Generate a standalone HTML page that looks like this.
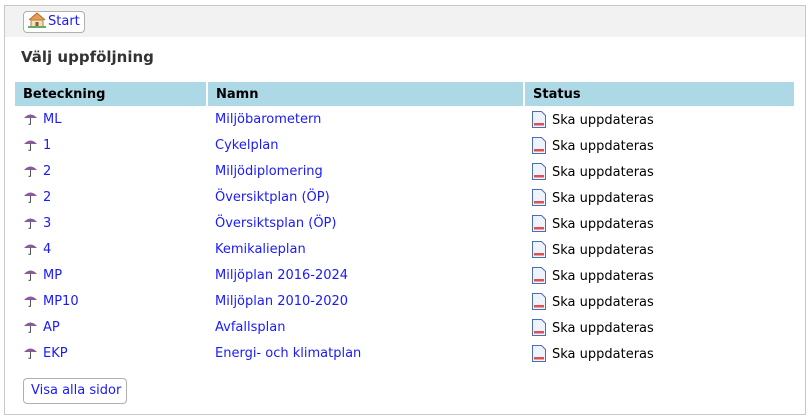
<!DOCTYPE html>
<html><head><meta charset="utf-8"><style>
*{box-sizing:border-box}
body{margin:0;width:809px;height:419px;background:#fff;font-family:"DejaVu Sans","Liberation Sans",sans-serif;font-size:13px;position:relative;overflow:hidden}
.outer{position:absolute;left:4px;top:5px;width:802px;height:410px;border:1px solid #c8c8c8;background:#fff}
.band{position:absolute;left:0;top:0;right:0;height:31px;background:#f2f2f2}
.btn{position:absolute;border:1px solid #b0b0b0;border-radius:4px;background:#fff;color:#1a1aff;line-height:20px}
h1{position:absolute;left:16px;top:42px;margin:0;font-size:15px;font-weight:bold;color:#333}
table{position:absolute;left:10px;top:76px;width:779px;border-collapse:collapse}
th{background:#add8e6;text-align:left;height:24px;padding:0 8px;font-weight:bold;color:#000;border-left:2px solid #fff}
th:first-child{border-left:none}
td{height:26px;padding:2px 8px 0;color:#1a1aff;vertical-align:middle;line-height:16px}
td.s{color:#000}
.u{display:inline-block;width:15px;height:13px;vertical-align:-2px;margin-right:5px}
.u svg,.d svg{display:block}
.d{display:inline-block;vertical-align:-3px;margin-right:6px;height:16px}
</style></head><body>
<div class="outer">
<div class="band"></div>
<div class="btn" style="left:18px;top:5px;width:62px;height:22px;padding-left:4px"><svg width="18" height="16" style="vertical-align:-3px;margin-right:2px" viewBox="0 0 18 16"><path d="M1 8L9 1l8 7" fill="#e8a050" stroke="#c06020"/><rect x="3" y="8" width="12" height="7" fill="#f4e0b0" stroke="#a08060"/><rect x="7.5" y="10" width="3" height="5" fill="#806040"/><rect x="0" y="14" width="18" height="2" fill="#6a6"/></svg>Start</div>
<h1>Välj uppföljning</h1>
<table>
<tr><th style="width:192px">Beteckning</th><th style="width:317px">Namn</th><th>Status</th></tr>
<tr><td><span class="u"><svg width="15" height="13" viewBox="0 0 15 13"><path d="M1 6Q7.5-1 14 6Z" fill="#8a5a9a"/><path d="M7.5 6v6q0 1-2 0" stroke="#555" fill="none"/></svg></span>ML</td><td>Miljöbarometern</td><td class="s"><span class="d"><svg width="14" height="17" viewBox="0 0 14 17"><path d="M.5 .5h9l4 4v12h-13z" fill="#eef3fb" stroke="#4a6fb0"/><rect x="2" y="12" width="10" height="2.5" fill="#e05050"/></svg></span>Ska uppdateras</td></tr>
<tr><td><span class="u"><svg width="15" height="13" viewBox="0 0 15 13"><path d="M1 6Q7.5-1 14 6Z" fill="#8a5a9a"/><path d="M7.5 6v6q0 1-2 0" stroke="#555" fill="none"/></svg></span>1</td><td>Cykelplan</td><td class="s"><span class="d"><svg width="14" height="17" viewBox="0 0 14 17"><path d="M.5 .5h9l4 4v12h-13z" fill="#eef3fb" stroke="#4a6fb0"/><rect x="2" y="12" width="10" height="2.5" fill="#e05050"/></svg></span>Ska uppdateras</td></tr>
<tr><td><span class="u"><svg width="15" height="13" viewBox="0 0 15 13"><path d="M1 6Q7.5-1 14 6Z" fill="#8a5a9a"/><path d="M7.5 6v6q0 1-2 0" stroke="#555" fill="none"/></svg></span>2</td><td>Miljödiplomering</td><td class="s"><span class="d"><svg width="14" height="17" viewBox="0 0 14 17"><path d="M.5 .5h9l4 4v12h-13z" fill="#eef3fb" stroke="#4a6fb0"/><rect x="2" y="12" width="10" height="2.5" fill="#e05050"/></svg></span>Ska uppdateras</td></tr>
<tr><td><span class="u"><svg width="15" height="13" viewBox="0 0 15 13"><path d="M1 6Q7.5-1 14 6Z" fill="#8a5a9a"/><path d="M7.5 6v6q0 1-2 0" stroke="#555" fill="none"/></svg></span>2</td><td>Översiktplan (ÖP)</td><td class="s"><span class="d"><svg width="14" height="17" viewBox="0 0 14 17"><path d="M.5 .5h9l4 4v12h-13z" fill="#eef3fb" stroke="#4a6fb0"/><rect x="2" y="12" width="10" height="2.5" fill="#e05050"/></svg></span>Ska uppdateras</td></tr>
<tr><td><span class="u"><svg width="15" height="13" viewBox="0 0 15 13"><path d="M1 6Q7.5-1 14 6Z" fill="#8a5a9a"/><path d="M7.5 6v6q0 1-2 0" stroke="#555" fill="none"/></svg></span>3</td><td>Översiktsplan (ÖP)</td><td class="s"><span class="d"><svg width="14" height="17" viewBox="0 0 14 17"><path d="M.5 .5h9l4 4v12h-13z" fill="#eef3fb" stroke="#4a6fb0"/><rect x="2" y="12" width="10" height="2.5" fill="#e05050"/></svg></span>Ska uppdateras</td></tr>
<tr><td><span class="u"><svg width="15" height="13" viewBox="0 0 15 13"><path d="M1 6Q7.5-1 14 6Z" fill="#8a5a9a"/><path d="M7.5 6v6q0 1-2 0" stroke="#555" fill="none"/></svg></span>4</td><td>Kemikalieplan</td><td class="s"><span class="d"><svg width="14" height="17" viewBox="0 0 14 17"><path d="M.5 .5h9l4 4v12h-13z" fill="#eef3fb" stroke="#4a6fb0"/><rect x="2" y="12" width="10" height="2.5" fill="#e05050"/></svg></span>Ska uppdateras</td></tr>
<tr><td><span class="u"><svg width="15" height="13" viewBox="0 0 15 13"><path d="M1 6Q7.5-1 14 6Z" fill="#8a5a9a"/><path d="M7.5 6v6q0 1-2 0" stroke="#555" fill="none"/></svg></span>MP</td><td>Miljöplan 2016-2024</td><td class="s"><span class="d"><svg width="14" height="17" viewBox="0 0 14 17"><path d="M.5 .5h9l4 4v12h-13z" fill="#eef3fb" stroke="#4a6fb0"/><rect x="2" y="12" width="10" height="2.5" fill="#e05050"/></svg></span>Ska uppdateras</td></tr>
<tr><td><span class="u"><svg width="15" height="13" viewBox="0 0 15 13"><path d="M1 6Q7.5-1 14 6Z" fill="#8a5a9a"/><path d="M7.5 6v6q0 1-2 0" stroke="#555" fill="none"/></svg></span>MP10</td><td>Miljöplan 2010-2020</td><td class="s"><span class="d"><svg width="14" height="17" viewBox="0 0 14 17"><path d="M.5 .5h9l4 4v12h-13z" fill="#eef3fb" stroke="#4a6fb0"/><rect x="2" y="12" width="10" height="2.5" fill="#e05050"/></svg></span>Ska uppdateras</td></tr>
<tr><td><span class="u"><svg width="15" height="13" viewBox="0 0 15 13"><path d="M1 6Q7.5-1 14 6Z" fill="#8a5a9a"/><path d="M7.5 6v6q0 1-2 0" stroke="#555" fill="none"/></svg></span>AP</td><td>Avfallsplan</td><td class="s"><span class="d"><svg width="14" height="17" viewBox="0 0 14 17"><path d="M.5 .5h9l4 4v12h-13z" fill="#eef3fb" stroke="#4a6fb0"/><rect x="2" y="12" width="10" height="2.5" fill="#e05050"/></svg></span>Ska uppdateras</td></tr>
<tr><td><span class="u"><svg width="15" height="13" viewBox="0 0 15 13"><path d="M1 6Q7.5-1 14 6Z" fill="#8a5a9a"/><path d="M7.5 6v6q0 1-2 0" stroke="#555" fill="none"/></svg></span>EKP</td><td>Energi- och klimatplan</td><td class="s"><span class="d"><svg width="14" height="17" viewBox="0 0 14 17"><path d="M.5 .5h9l4 4v12h-13z" fill="#eef3fb" stroke="#4a6fb0"/><rect x="2" y="12" width="10" height="2.5" fill="#e05050"/></svg></span>Ska uppdateras</td></tr>
</table>
<div class="btn" style="left:18px;top:372px;width:104px;height:26px;padding-left:7px;line-height:24px">Visa alla sidor</div>
</div>
</body></html>
